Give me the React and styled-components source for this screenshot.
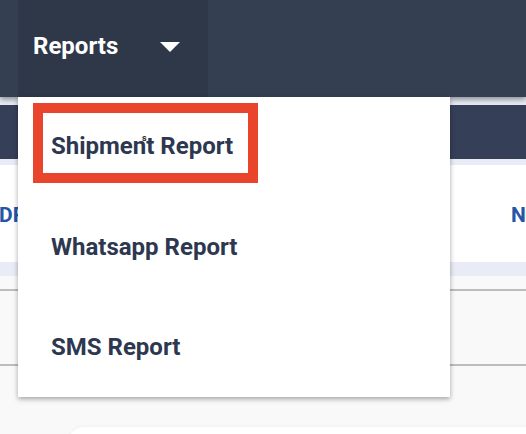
import React from "react";
import styled, { createGlobalStyle } from "styled-components";

const Global = createGlobalStyle`
  html, body { margin: 0; padding: 0; }
  body {
    width: 526px;
    height: 434px;
    overflow: hidden;
    background: #e9ecf6;
    font-family: Roboto, "Liberation Sans", Arial, sans-serif;
  }
`;

const Page = styled.div`
  position: relative;
  width: 526px;
  height: 434px;
  overflow: hidden;
  display: flex;
  flex-direction: column;
  background: #e9ecf6;
`;

const Header = styled.header`
  position: relative;
  z-index: 2;
  height: 97px;
  flex: none;
  background: #343f52;
  box-shadow: 0 2px 6px rgba(0, 0, 0, 0.45);
  display: flex;
  padding-left: 18px;
`;

const NavTab = styled.div`
  width: 190px;
  height: 100%;
  background: #2e3849;
  display: flex;
  align-items: center;
  padding: 0 0 6px 15px;
  box-sizing: border-box;
  gap: 42px;
  color: #ffffff;
  font-size: 24px;
  font-weight: 700;
`;

const Caret = styled.span`
  width: 0;
  height: 0;
  border-left: 10px solid transparent;
  border-right: 10px solid transparent;
  border-top: 10px solid #ffffff;
  margin-top: 2px;
`;

const SubBar = styled.div`
  flex: none;
  height: 54px;
  margin-top: 8px;
  background: #353f57;
`;

const TabsPanel = styled.div`
  flex: none;
  height: 97px;
  margin-top: 6px;
  background: #ffffff;
  display: flex;
  justify-content: space-between;
  align-items: flex-start;
  padding-top: 38px;
  box-sizing: border-box;
  overflow: hidden;
`;

const TabLink = styled.span`
  color: #2556a6;
  font-size: 21px;
  font-weight: 700;
  white-space: nowrap;
  margin: ${(p) => (p.$end ? "0 -30px 0 0" : "0 0 0 -1px")};
`;

const Content = styled.div`
  flex: 1;
  margin-top: 14px;
  background: #f9f9f9;
  padding-top: 13px;
  display: flex;
  flex-direction: column;
`;

const Rule = styled.div`
  height: 2px;
  background: #bdbdbd;
`;

const TableRow = styled.div`
  height: 73px;
`;

const Card = styled.div`
  margin: 61px 0 0 68px;
  height: 40px;
  background: #ffffff;
  border-radius: 16px 0 0 0;
  box-shadow: 0 0 4px rgba(0, 0, 0, 0.06);
`;

const Menu = styled.div`
  position: absolute;
  z-index: 3;
  left: 18px;
  top: 97px;
  width: 432px;
  background: #ffffff;
  box-shadow: 0 2px 5px rgba(0, 0, 0, 0.35);
  display: flex;
  flex-direction: column;
`;

const MenuItem = styled.div`
  position: relative;
  height: 100px;
  display: flex;
  align-items: center;
  padding-left: 33px;
  padding-bottom: ${(p) => (p.$first ? "3px" : "0")};
  box-sizing: border-box;
  color: #2d3850;
  font-size: 24px;
  font-weight: 700;
`;

const Highlight = styled.span`
  position: absolute;
  left: 15px;
  top: 6px;
  width: 225px;
  height: 80px;
  box-sizing: border-box;
  border: 10px solid #e9452c;
  pointer-events: none;
`;

const CursorMark = styled.span`
  position: absolute;
  left: 124px;
  top: 37px;
  font-size: 9px;
  font-weight: 700;
  color: #2a2a2a;
  line-height: 1;
`;

export default function App() {
  return (
    <>
      <Global />
      <Page>
        <Header>
          <NavTab>
            <span>Reports</span>
            <Caret />
          </NavTab>
        </Header>
        <SubBar />
        <TabsPanel>
          <TabLink>DRAFT</TabLink>
          <TabLink $end>NEW</TabLink>
        </TabsPanel>
        <Content>
          <Rule />
          <TableRow />
          <Rule />
          <Card />
        </Content>
        <Menu>
          <MenuItem $first>
            <Highlight />
            <CursorMark>s</CursorMark>
            Shipment Report
          </MenuItem>
          <MenuItem>Whatsapp Report</MenuItem>
          <MenuItem>SMS Report</MenuItem>
        </Menu>
      </Page>
    </>
  );
}
